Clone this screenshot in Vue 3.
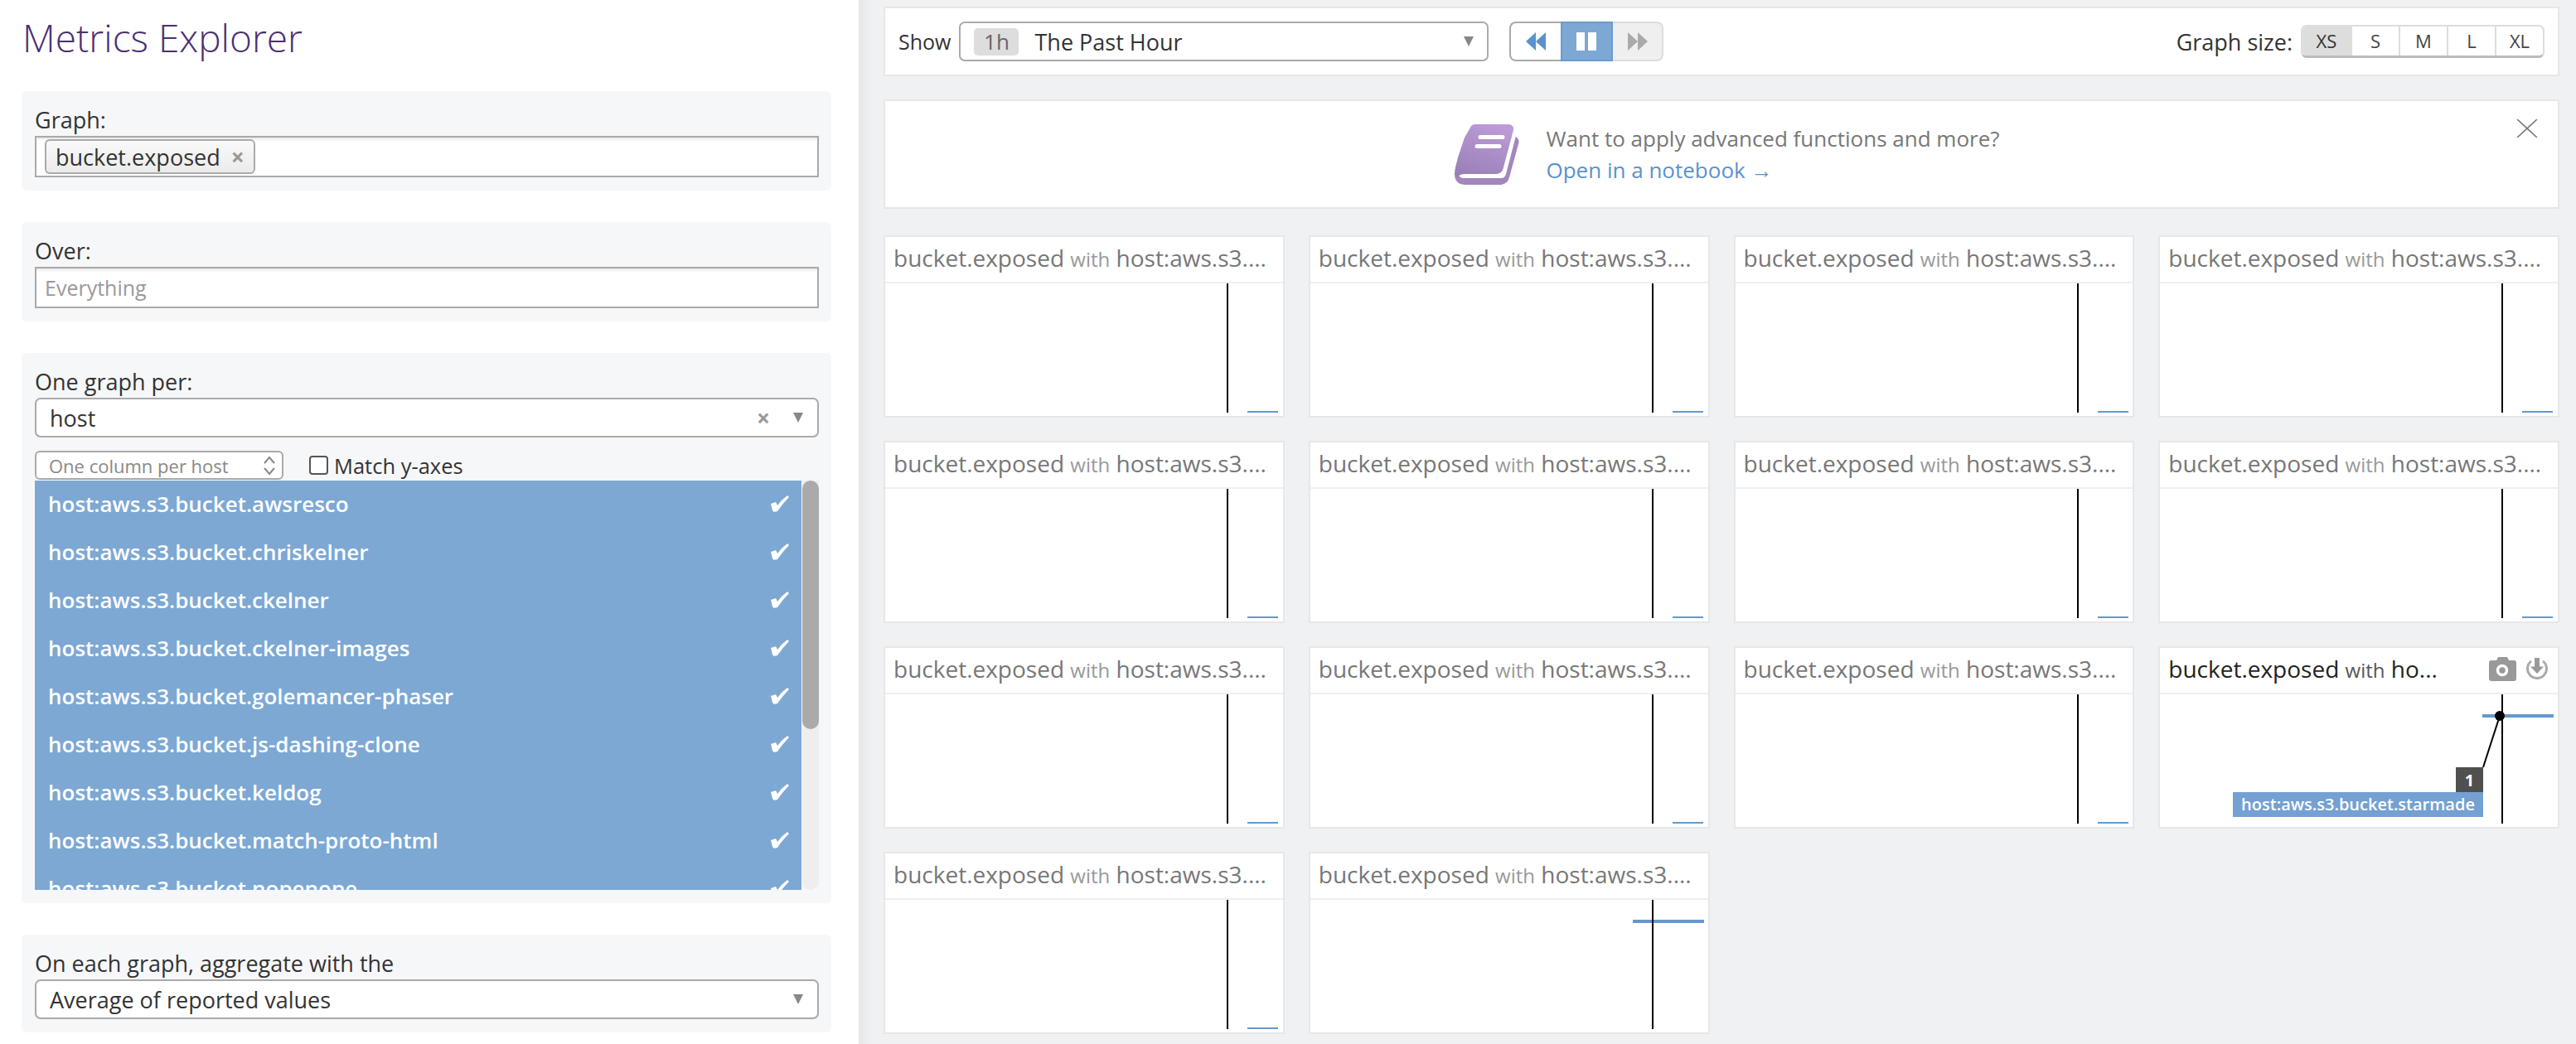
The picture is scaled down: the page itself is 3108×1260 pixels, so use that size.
<script setup>
const hosts = [
  'host:aws.s3.bucket.awsresco',
  'host:aws.s3.bucket.chriskelner',
  'host:aws.s3.bucket.ckelner',
  'host:aws.s3.bucket.ckelner-images',
  'host:aws.s3.bucket.golemancer-phaser',
  'host:aws.s3.bucket.js-dashing-clone',
  'host:aws.s3.bucket.keldog',
  'host:aws.s3.bucket.match-proto-html',
  'host:aws.s3.bucket.nopenope',
]

const sizes = ['XS', 'S', 'M', 'L', 'XL']

// 14 graphs, the 12th is hovered and the 14th has its value up high
const cards = Array.from({ length: 14 }, (_, i) => ({
  id: i,
  hovered: i === 11,
  high: i === 13,
}))
</script>

<template>
  <div class="page">
    <aside class="side">
      <h1 class="title">Metrics Explorer</h1>

      <section class="panel">
        <div class="label">Graph:</div>
        <div class="input">
          <span class="tag">bucket.exposed<span class="tag-x">×</span></span>
        </div>
      </section>

      <section class="panel">
        <div class="label">Over:</div>
        <div class="input placeholder">Everything</div>
      </section>

      <section class="panel">
        <div class="label">One graph per:</div>
        <div class="select">
          <span class="select-value">host</span>
          <span class="select-x">×</span>
          <span class="caret"></span>
        </div>
        <div class="controls">
          <div class="mini-select">
            <span>One column per host</span>
            <svg class="updown" width="16" height="26" viewBox="0 0 16 26">
              <path d="M2 10 8 3l6 7M2 16l6 7 6-7" fill="none" stroke="#888" stroke-width="2" />
            </svg>
          </div>
          <span class="checkbox"></span>
          <span class="check-label">Match y-axes</span>
        </div>
        <div class="list-wrap">
          <ul class="list">
            <li v-for="host in hosts" :key="host" class="list-row">
              <span>{{ host }}</span>
              <svg class="tick" width="22" height="20" viewBox="0 0 22 20">
                <path d="M0 10 6 8l2 4Q13 5 20 0l2 2Q14 10 8 19 3 21 2 18Z" fill="#fff" />
              </svg>
            </li>
          </ul>
          <div class="track"><div class="thumb"></div></div>
        </div>
      </section>

      <section class="panel">
        <div class="label">On each graph, aggregate with the</div>
        <div class="select">
          <span class="select-value">Average of reported values</span>
          <span class="caret"></span>
        </div>
      </section>
    </aside>

    <main class="main">
      <div class="toolbar">
        <span class="show">Show</span>
        <div class="range">
          <span class="range-badge">1h</span>
          <span class="range-text">The Past Hour</span>
          <span class="caret"></span>
        </div>
        <div class="player">
          <button class="pl pl-back">
            <svg width="24" height="22" viewBox="0 0 24 22"><path d="M12 0v22L0 11zM24 0v22L12 11z" fill="#5b92cb" /></svg>
          </button>
          <button class="pl pl-pause">
            <svg width="24" height="22" viewBox="0 0 24 22"><path d="M0 0h10v22H0zM14 0h10v22H14z" fill="#fff" /></svg>
          </button>
          <button class="pl pl-next">
            <svg width="24" height="22" viewBox="0 0 24 22"><path d="M0 0l12 11L0 22zM12 0l12 11-12 11z" fill="#aaa" /></svg>
          </button>
        </div>
        <span class="size-label">Graph size:</span>
        <div class="sizes">
          <span v-for="s in sizes" :key="s" class="size" :class="{ active: s === 'XS' }">{{ s }}</span>
        </div>
      </div>

      <div class="banner">
        <svg class="book" width="78" height="73" viewBox="0 0 78 73">
          <defs>
            <linearGradient id="bookfill" x1="0.7" y1="0" x2="0.3" y2="1">
              <stop offset="0" stop-color="#bd9bd8" />
              <stop offset="1" stop-color="#9a80b6" />
            </linearGradient>
          </defs>
          <path d="M73 14 77 18Q78 20 77 24L66 64Q64 72 56 73H14Q0 73 0 60L6 50H60Z" fill="#a286bd" />
          <path d="M71 8 74 14 62 60Q61 65 56 65H12Q5 65 5 60Z" fill="#fff" />
          <path d="M19 4Q20 0 26 0H64Q72 0 71 7L59 52Q57 60 50 60H13Q6 60 3 64L0 60Q0 56 1 52L4 40 8 28 12 16Z" fill="url(#bookfill)" />
          <path d="M31 15.500H58M27 26.500H54" stroke="#fff" stroke-width="5" stroke-linecap="round" fill="none" />
        </svg>
        <div class="banner-text">
          <div class="banner-q">Want to apply advanced functions and more?</div>
          <div class="banner-link">Open in a notebook →</div>
        </div>
        <svg class="close" width="26" height="22" viewBox="0 0 26 22">
          <path d="M1 0l24 22M25 0L1 22" stroke="#777" stroke-width="1.600" fill="none" />
        </svg>
      </div>

      <div class="grid">
        <article v-for="card in cards" :key="card.id" class="card" :class="{ hovered: card.hovered }">
          <header class="card-head">
            <span class="card-title" v-if="card.hovered">bucket.exposed <span class="with">with</span> ho...</span>
            <span class="card-title" v-else>bucket.exposed <span class="with">with</span> host:aws.s3....</span>
            <template v-if="card.hovered">
              <svg class="cam" width="33" height="29" viewBox="0 0 33 29">
                <path d="M11 0h11l2 4h6a3 3 0 0 1 3 3v19a3 3 0 0 1-3 3H3a3 3 0 0 1-3-3V7a3 3 0 0 1 3-3h6z" fill="#999" />
                <circle cx="16" cy="16" r="5.500" fill="none" stroke="#fff" stroke-width="3.500" />
              </svg>
              <svg class="dl" width="26" height="26" viewBox="0 0 26 26">
                <path d="M6 3.900A11.500 11.500 0 1 0 20 3.900" fill="none" stroke="#aaa" stroke-width="3" />
                <path d="M10 0h6v10.500h5L13 19 5 10.500h5z" fill="#999" />
              </svg>
            </template>
          </header>
          <div class="chart">
            <svg class="chart-svg" width="478" height="156" viewBox="0 0 478 156">
              <template v-if="card.hovered">
                <path d="M389 26h86" stroke="#6598cf" stroke-width="4" />
                <path d="M413 0v156" stroke="#000" stroke-width="2" />
                <path d="M410 26 390 88" stroke="#000" stroke-width="2" />
                <circle cx="410" cy="26" r="6" fill="#000" />
              </template>
              <template v-else-if="card.high">
                <path d="M389 26h86" stroke="#6598cf" stroke-width="4" />
                <path d="M413 0v156" stroke="#000" stroke-width="2" />
              </template>
              <template v-else>
                <path d="M413 0v156" stroke="#000" stroke-width="2" />
                <path d="M437 155h37" stroke="#6598cf" stroke-width="2" />
              </template>
            </svg>
            <div v-if="card.hovered" class="tip">
              <span class="tip-num">1</span>
              <span class="tip-host">host:aws.s3.bucket.starmade</span>
            </div>
          </div>
        </article>
      </div>
    </main>
  </div>
</template>

<style>
body {
  margin: 0;
  background: #f0f1f3;
}
</style>

<style scoped>
.page {
  display: flex;
  width: 3108px;
  height: 1260px;
  overflow: hidden;
  font-family: "Open Sans", "Liberation Sans", sans-serif;
  color: #333;
}

/* left column */
.side {
  flex: 0 0 1036px;
  box-sizing: border-box;
  background: #fff;
  padding: 0 33px 0 26px;
}

.title {
  margin: 0;
  height: 110px;
  padding-left: 1px;
  box-sizing: border-box;
  padding-top: 18px;
  font-size: 46px;
  line-height: 54px;
  font-weight: 300;
  color: #4a2f73;
}

.panel {
  background: #f6f7f9;
  border-radius: 6px;
  padding: 18px 15px 16px 16px;
  margin-bottom: 38px;
}

.label {
  height: 36px;
  line-height: 34px;
  font-size: 27px;
}

.input {
  box-sizing: border-box;
  height: 50px;
  border: 2px solid #aaa;
  background: #fff;
  box-shadow: inset 0 4px 4px -3px rgba(0, 0, 0, 0.15);
  padding: 2px 10px;
  display: flex;
  align-items: center;
  font-size: 25px;
}

.placeholder {
  color: #999;
}

.tag {
  display: flex;
  align-items: center;
  box-sizing: border-box;
  height: 42px;
  width: 254px;
  padding: 0 11px;
  border: 2px solid #aaa;
  border-radius: 6px;
  background: linear-gradient(#f9f9f9, #ebebeb);
  font-size: 27px;
  color: #333;
}

.tag-x {
  margin-left: 13px;
  color: #999;
  font-size: 28px;
  line-height: 1;
  font-weight: 700;
}

.select {
  display: flex;
  align-items: center;
  box-sizing: border-box;
  height: 48px;
  padding: 0 17px 0 16px;
  border: 2px solid #aaa;
  border-radius: 7px;
  background: #fff;
}

.select-value {
  flex: 1;
  font-size: 27px;
}

.select-x {
  color: #999;
  font-size: 28px;
  line-height: 1;
  font-weight: 700;
  margin-right: 28px;
}

.caret {
  width: 0;
  height: 0;
  border-left: 6px solid transparent;
  border-right: 6px solid transparent;
  border-top: 12px solid #888;
}

.controls {
  display: flex;
  align-items: center;
  height: 35px;
  margin-top: 16px;
  margin-bottom: 1px;
}

.mini-select {
  box-sizing: border-box;
  display: flex;
  align-items: center;
  justify-content: space-between;
  width: 300px;
  height: 35px;
  padding: 0 7px 0 15px;
  border: 2px solid #aaa;
  border-radius: 6px;
  background: #fff;
  font-size: 22px;
  color: #888;
}

.checkbox {
  box-sizing: border-box;
  width: 23px;
  height: 23px;
  margin: 0 7px 0 31px;
  border: 2px solid #555;
  border-radius: 4px;
  background: #fff;
}

.check-label {
  font-size: 25.500px;
}

.list-wrap {
  display: flex;
  height: 494px;
  overflow: hidden;
}

.list {
  flex: 1;
  margin: 0;
  padding: 0;
  list-style: none;
  background: #7da8d4;
}

.list-row {
  display: flex;
  align-items: center;
  justify-content: space-between;
  box-sizing: border-box;
  height: 58px;
  padding: 0 15px 2px 16px;
  color: #fff;
  font-size: 26px;
  font-weight: 600;
}

.track {
  flex: 0 0 20px;
  margin-left: 1px;
  background: #eee;
  border-radius: 0 0 10px 10px;
}

.thumb {
  height: 300px;
  background: #aaa;
  border-radius: 10px;
}

/* right column */
.main {
  flex: 1;
  min-width: 0;
  box-sizing: border-box;
  padding: 8px 20px 0 30px;
  background: linear-gradient(90deg, #e6e7e9, #f0f1f3 16px) no-repeat;
}

.toolbar {
  display: flex;
  align-items: center;
  box-sizing: border-box;
  height: 84px;
  padding: 0 16px;
  border: 2px solid #e6e7e9;
  background: #fff;
}

.show {
  font-size: 25px;
  margin-right: 10px;
}

.range {
  display: flex;
  align-items: center;
  box-sizing: border-box;
  width: 639px;
  height: 48px;
  padding: 0 16px;
  border: 2px solid #aaa;
  border-radius: 7px;
}

.range-badge {
  width: 54px;
  height: 33px;
  line-height: 33px;
  text-align: center;
  background: #ddd;
  border-radius: 5px;
  font-size: 26px;
  color: #666;
}

.range-text {
  flex: 1;
  margin-left: 19px;
  font-size: 27px;
}

.player {
  display: flex;
  margin-left: 25px;
}

.pl {
  display: flex;
  align-items: center;
  justify-content: center;
  box-sizing: border-box;
  width: 61.500px;
  height: 48px;
  padding: 0;
  border: 2px solid #aaa;
  background: #fff;
}

.pl-back {
  border-right: 0;
  border-radius: 8px 0 0 8px;
}

.pl-pause {
  width: 63px;
  border-color: #6a9bd0;
  background: #7da8d4;
}

.pl-next {
  border-color: #ddd;
  border-left: 0;
  border-radius: 0 8px 8px 0;
  background: #efefef;
}

.size-label {
  margin-left: auto;
  margin-right: 10px;
  font-size: 27px;
}

.sizes {
  display: flex;
  box-sizing: border-box;
  height: 40px;
  border: 2px solid #ddd;
  border-bottom: 3px solid #bbb;
  border-radius: 7px;
  overflow: hidden;
}

.size {
  box-sizing: border-box;
  width: 58px;
  line-height: 34px;
  text-align: center;
  border-left: 2px solid #ddd;
  font-size: 22px;
  color: #444;
}

.size:first-child {
  border-left: 0;
}

.size.active {
  background: #ddd;
  color: #333;
}

.banner {
  display: flex;
  align-items: center;
  justify-content: center;
  position: relative;
  box-sizing: border-box;
  height: 132px;
  margin-top: 28px;
  padding-left: 14px;
  border: 2px solid #e6e7e9;
  background: #fff;
}

.banner-text {
  margin-left: 32px;
}

.banner-q {
  font-size: 26px;
  line-height: 38px;
  color: #777;
}

.banner-link {
  font-size: 26px;
  line-height: 38px;
  color: #5b92cb;
}

.close {
  position: absolute;
  top: 22px;
  right: 24px;
}

.grid {
  display: grid;
  grid-template-columns: repeat(4, minmax(0, 1fr));
  grid-auto-rows: 220px;
  gap: 28px 29px;
  margin-top: 32px;
}

.card {
  display: flex;
  flex-direction: column;
  box-sizing: border-box;
  min-width: 0;
  border: 2px solid #e6e7e9;
  background: #fff;
}

.card-head {
  display: flex;
  align-items: center;
  flex: 0 0 56px;
  box-sizing: border-box;
  padding: 0 10px 4px;
  border-bottom: 2px solid #eeeff1;
}

.card-title {
  flex: 1;
  white-space: nowrap;
  font-size: 28px;
  color: #777;
}

.with {
  font-size: 24px;
  color: #999;
}

.hovered .card-title {
  color: #222;
}

.hovered .with {
  color: #555;
}

.cam {
  margin-right: 12px;
}

.dl {
  margin-right: 2px;
}

.chart {
  position: relative;
  flex: 1;
}

.chart-svg {
  display: block;
}

.tip {
  position: absolute;
  right: 90px;
  top: 88px;
  display: flex;
  flex-direction: column;
  align-items: flex-end;
}

.tip-num {
  width: 33px;
  height: 30px;
  line-height: 32px;
  text-align: center;
  background: #505050;
  color: #fff;
  font-size: 20px;
  font-weight: 700;
}

.tip-host {
  width: 302px;
  height: 30px;
  line-height: 30px;
  text-align: center;
  background: #74a1d2;
  color: #fff;
  font-size: 20px;
  font-weight: 600;
}
</style>
